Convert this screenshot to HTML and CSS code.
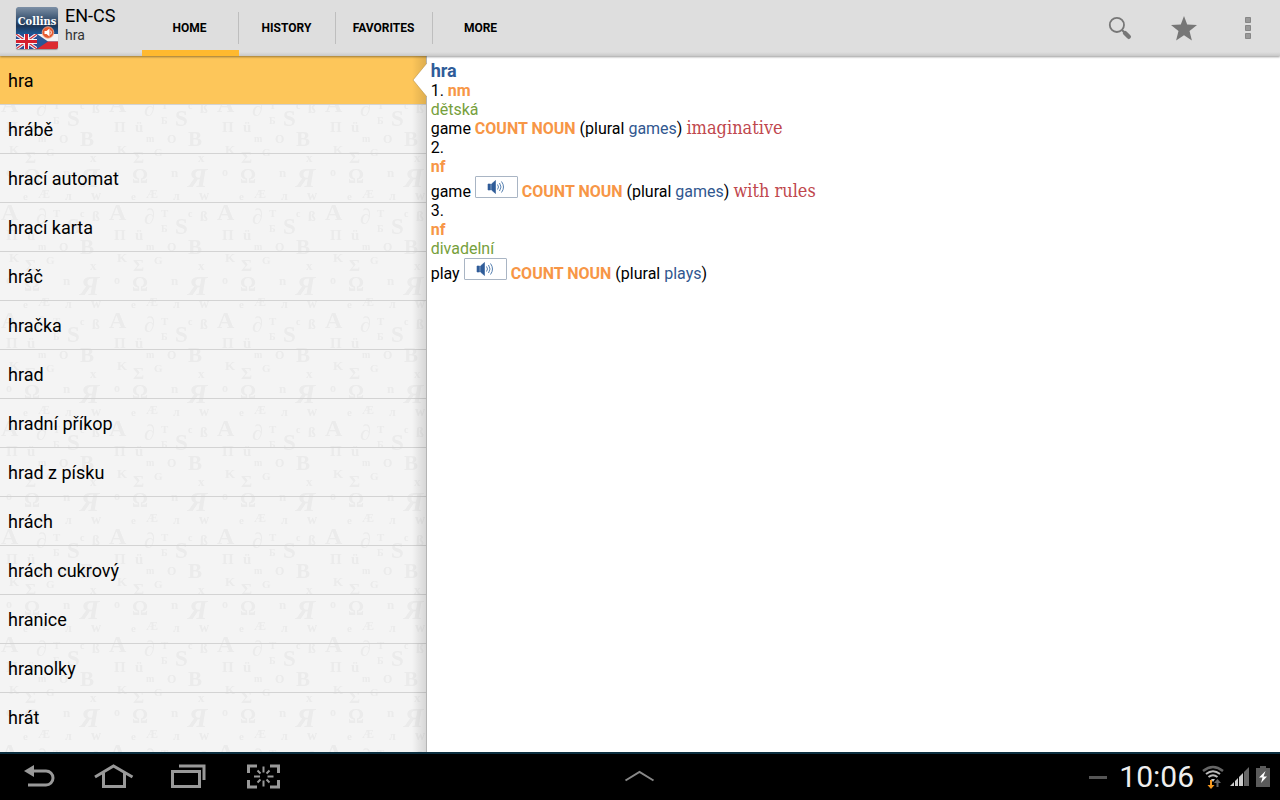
FILE: index.html
```html
<!DOCTYPE html>
<html lang="en">
<head>
<meta charset="utf-8">
<meta name="viewport" content="width=device-width, initial-scale=1">
<title>EN-CS: hra</title>
<link rel="stylesheet" href="styles.css">
</head>
<body>
<header class="action-bar">
  <svg class="app-icon" viewBox="0 0 42 42" aria-hidden="true">
    <defs>
      <linearGradient id="logo-sky" x1="0" y1="0" x2="0" y2="1">
        <stop offset="0" stop-color="#7d90a6"/>
        <stop offset=".25" stop-color="#435c78"/>
        <stop offset=".45" stop-color="#1c3557"/>
        <stop offset=".7" stop-color="#1d62a8"/>
      </linearGradient>
      <clipPath id="uk"><rect x="0" y="27" width="21" height="15"/></clipPath>
    </defs>
    <rect width="42" height="42" rx="2" fill="url(#logo-sky)"/>
    <g clip-path="url(#uk)">
      <rect y="27" width="21" height="15" fill="#2b4a92"/>
      <path d="M0 27l21 15M21 27L0 42" stroke="#f1f1f5" stroke-width="3.4"/>
      <path d="M0 27l21 15M21 27L0 42" stroke="#d2303c" stroke-width="1.2"/>
      <path d="M10.5 27v15M0 34.5h21" stroke="#f4f4f6" stroke-width="5"/>
      <path d="M10.5 27v15M0 34.5h21" stroke="#d5202e" stroke-width="3"/>
    </g>
    <rect x="21" y="27" width="21" height="7.5" fill="#f3f3f3"/>
    <rect x="21" y="34.5" width="21" height="7.5" fill="#dd2a30"/>
    <path d="M21 27l11 7.5L21 42z" fill="#2c5795"/>
    <text class="app-icon-text" x="21" y="18" text-anchor="middle">Collins</text>
    <circle cx="32" cy="25.500" r="5.800" fill="#e5592f" stroke="#f3b49b" stroke-width=".8"/>
    <path d="M28.500 24h2l3-2.500v8l-3-2.500h-2z" fill="#fff"/>
    <path d="M34.700 23.500q1.300 2 0 4" stroke="#fff" fill="none"/>
  </svg>
  <div class="titles">
    <h1 class="title">EN-CS</h1>
    <p class="subtitle">hra</p>
  </div>
  <nav class="tabs" aria-label="Sections">
    <a class="tab tab-active" href="#home" aria-current="page">HOME</a>
    <a class="tab" href="#history">HISTORY</a>
    <a class="tab" href="#favorites">FAVORITES</a>
    <a class="tab" href="#more">MORE</a>
  </nav>
  <div class="actions">
    <button class="action" type="button" aria-label="Search">
      <svg viewBox="0 0 32 32" width="32" height="32"><circle cx="12.900" cy="12.900" r="7.100" fill="none" stroke="#777" stroke-width="1.800"/><path d="M18 18l3 3" stroke="#777" stroke-width="2"/><path d="M21 21l3.800 3.800" stroke="#777" stroke-width="4.400" stroke-linecap="round"/></svg>
    </button>
    <button class="action" type="button" aria-label="Add to favorites">
      <svg viewBox="0 0 32 32" width="32" height="32"><path d="M16 4l3.200 8.400 9.800.5-7.500 6.200 2.400 9.400L16 23.300l-7.900 5.200 2.400-9.400L3 12.900l9.800-.5z" fill="#777"/></svg>
    </button>
    <button class="action" type="button" aria-label="More options">
      <svg viewBox="0 0 32 32" width="32" height="32"><path d="M13.500 5.500h5v5h-5zM13.500 13.500h5v5h-5zM13.500 21.500h5v5h-5z" fill="#999" stroke="#878787"/></svg>
    </button>
  </div>
</header>

<main class="content">
  <section class="word-pane" aria-label="Words">
    <svg class="letters" aria-hidden="true">
      <defs>
        <pattern id="letter-tile" width="108" height="108" patternUnits="userSpaceOnUse" patternTransform="translate(0 38)">
          <text x="1" y="18" font-size="24">A</text>
          <text x="36" y="22" font-size="22">&#8706;</text>
          <text x="53" y="15" font-size="11">T</text>
          <text x="80" y="15" font-size="10">c</text>
          <text x="92" y="19" font-size="14">&#223;</text>
          <text x="67" y="32" font-size="23">S</text>
          <text x="53" y="30" font-size="10">&#1041;</text>
          <text x="27" y="38" font-size="15">&#252;</text>
          <text x="6" y="38" font-size="15">&#1055;</text>
          <text x="38" y="48" font-size="10">m</text>
          <text x="59" y="49" font-size="12">O</text>
          <text x="80" y="52" font-size="21">B</text>
          <text x="9" y="60" font-size="13">K</text>
          <text x="25" y="69" font-size="17">&#931;</text>
          <text x="46" y="62" font-size="11">G</text>
          <text x="90" y="68" font-size="13">x</text>
          <text x="24" y="89" font-size="20">&#937;</text>
          <text x="63" y="83" font-size="13">n</text>
          <text x="80" y="93" font-size="28" font-style="italic">&#1071;</text>
          <text x="6" y="82" font-size="12">o</text>
          <text x="38" y="104" font-size="12">&#198;</text>
          <text x="65" y="106" font-size="12">&#1083;</text>
          <text x="91" y="106" font-size="14">w</text>
          <text x="23" y="106" font-size="11">e</text>
        </pattern>
      </defs>
      <rect width="100%" height="100%" fill="url(#letter-tile)"/>
    </svg>
    <ul class="words">
      <li class="word word-active"><a href="#w1" aria-current="true">hra</a></li>
      <li class="word"><a href="#w2">hrábě</a></li>
      <li class="word"><a href="#w3">hrací automat</a></li>
      <li class="word"><a href="#w4">hrací karta</a></li>
      <li class="word"><a href="#w5">hráč</a></li>
      <li class="word"><a href="#w6">hračka</a></li>
      <li class="word"><a href="#w7">hrad</a></li>
      <li class="word"><a href="#w8">hradní příkop</a></li>
      <li class="word"><a href="#w9">hrad z písku</a></li>
      <li class="word"><a href="#w10">hrách</a></li>
      <li class="word"><a href="#w11">hrách cukrový</a></li>
      <li class="word"><a href="#w12">hranice</a></li>
      <li class="word"><a href="#w13">hranolky</a></li>
      <li class="word"><a href="#w14">hrát</a></li>
    </ul>
    <svg class="pointer" viewBox="0 0 15 42" aria-hidden="true"><path d="M15 0v7L1 24l14 17z" fill="#fff"/><path d="M15 7L1 24l14 17" fill="none" stroke="#b9924a" stroke-opacity=".6"/></svg>
  </section>

  <article class="entry">
    <h2 class="headword">hra</h2>
    <p>1. <b class="gram">nm</b></p>
    <p class="context">dětská</p>
    <p>game <b class="gram">COUNT NOUN</b> (plural <a class="form" href="#games">games</a>) <span class="note">imaginative</span></p>
    <p>2.</p>
    <p><b class="gram">nf</b></p>
    <p>game <button class="sound" type="button" aria-label="Play pronunciation of game"><svg viewBox="0 0 18 14" width="18" height="14"><path d="M1 4h2.500v6H1z M4.500 4L8.500 .5v13L4.500 10z" fill="#2f5c99" stroke="#2f5c99" stroke-width=".6"/><path d="M10.500 4.500q2 2.500 0 5M12.500 3q3 4 0 8M14.500 1.500q4 5.500 0 11" fill="none" stroke="#5680b0"/></svg></button> <b class="gram">COUNT NOUN</b> (plural <a class="form" href="#games">games</a>) <span class="note">with rules</span></p>
    <p>3.</p>
    <p><b class="gram">nf</b></p>
    <p class="context">divadelní</p>
    <p>play <button class="sound" type="button" aria-label="Play pronunciation of play"><svg viewBox="0 0 18 14" width="18" height="14"><path d="M1 4h2.500v6H1z M4.500 4L8.500 .5v13L4.500 10z" fill="#2f5c99" stroke="#2f5c99" stroke-width=".6"/><path d="M10.500 4.500q2 2.500 0 5M12.500 3q3 4 0 8M14.500 1.500q4 5.500 0 11" fill="none" stroke="#5680b0"/></svg></button> <b class="gram">COUNT NOUN</b> (plural <a class="form" href="#plays">plays</a>)</p>
  </article>
</main>

<footer class="system-bar">
  <div class="nav-keys">
    <button class="key" type="button" aria-label="Back"><svg viewBox="0 0 40 32" width="40" height="32"><path d="M12 10h15a6.800 6.800 0 0 1 0 14H9" fill="none" stroke="#999" stroke-width="3"/><path d="M5 10l10-6v12z" fill="#999"/></svg></button>
    <button class="key" type="button" aria-label="Home"><svg viewBox="0 0 40 32" width="40" height="32"><path d="M1 16L19.500 5l19 11M9.500 12v13.500h21V12" fill="none" stroke="#999" stroke-width="3"/></svg></button>
    <button class="key" type="button" aria-label="Recent apps"><svg viewBox="0 0 40 32" width="40" height="32"><path d="M3.500 10.500h27v15h-27zM10 5h25v14" fill="none" stroke="#999" stroke-width="3"/></svg></button>
    <button class="key" type="button" aria-label="Screenshot"><svg viewBox="0 0 40 32" width="40" height="32"><path d="M13 5H4.500v7M26 5h8.500v7M13 26H4.500v-7M26 26h8.500v-7" fill="none" stroke="#999" stroke-width="3"/><path d="M19.500 5.500v6M19.500 19.500v6M10 15.500h6M23.500 15.500h6M13.500 9.500l3 3M25.500 9.500l-3 3M13.500 21.500l3-3M25.500 21.500l-3-3" fill="none" stroke="#999" stroke-width="2"/></svg></button>
  </div>
  <button class="key" type="button" aria-label="Show mini apps"><svg viewBox="0 0 40 32" width="40" height="32"><path d="M5.500 19.500l14-8.500 14 8.500" fill="none" stroke="#888" stroke-width="2"/></svg></button>
  <div class="status">
    <span class="dash"></span>
    <time class="clock">10:06</time>
    <svg viewBox="0 0 22 24" width="22" height="24" aria-hidden="true"><path d="M1 6q10-8 20 0" fill="none" stroke="#666" stroke-width="2.500"/><path d="M4 9q7-5.500 14 0M6.500 12q4.500-3.500 9 0" fill="none" stroke="#bbb" stroke-width="2"/><path d="M9 14h4l-2 3z" fill="#ccc"/><path d="M8 15v5H5.500L9 24l3.500-4H10v-5z" fill="#f79a20"/><path d="M14.500 22v-4H12l3.500-4 3.500 4h-2.500v4z" fill="#666"/></svg>
    <svg viewBox="0 0 20 20" width="20" height="20" aria-hidden="true"><path d="M0 19h4v-4zM5 19h3v-8l-3 3zM9 19h4V6L9 10z" fill="#ccc"/><path d="M14 19h5V0l-5 5z" fill="#666"/></svg>
    <svg viewBox="0 0 14 22" width="14" height="22" aria-hidden="true"><path d="M4 0h6v2h4v19H0V2h4z" fill="#5b5b5b"/><path d="M9.500 5L3 11.500h3.500L5 17l6-6.500H7.500z" fill="#fff"/></svg>
  </div>
</footer>
</body>
</html>
```
FILE: styles.css
```css
* {
  box-sizing: border-box;
}

body {
  margin: 0;
  height: 100vh;
  display: flex;
  flex-direction: column;
  overflow: hidden;
  background: #fff;
  color: #000;
  font-family: Roboto, "Noto Sans", sans-serif;
}

h1, h2, p, ul {
  margin: 0;
  padding: 0;
  font-weight: 400;
}

a {
  color: inherit;
  text-decoration: none;
}

button {
  margin: 0;
  padding: 0;
  border: 0;
  background: none;
}

svg {
  display: block;
}

/* Top bar */
.action-bar {
  position: relative;
  z-index: 2;
  flex: none;
  height: 56px;
  display: flex;
  padding-left: 16px;
  background: linear-gradient(#dedede 0 52px, #d4d4d4 54px, #c8c8c8);
  box-shadow: 0 1px 2px rgba(0, 0, 0, .4);
}

.app-icon {
  width: 42px;
  height: 42px;
  align-self: center;
  margin-right: 7px;
  border-radius: 2px;
  box-shadow: 0 1px 1px #999;
}

.app-icon-text {
  fill: #fff;
  font: bold 11px "DejaVu Serif Condensed", "DejaVu Serif", serif;
}

.titles {
  width: 77px;
  padding-top: 5px;
}

.title {
  font-size: 18px;
  line-height: 22px;
}

.subtitle {
  color: #333;
  font-size: 14px;
  line-height: 16px;
}

.tabs {
  display: flex;
}

.tab {
  width: 97px;
  display: flex;
  align-items: center;
  justify-content: center;
  border-bottom: 6px solid transparent;
  padding: 6px 2px 0 0;
  font-size: 12px;
  font-weight: 700;
  background: linear-gradient(#bebebe, #bebebe) right 12px / 1px 32px no-repeat padding-box;
}

.tab:last-child {
  background: none;
}

.tab-active {
  border-bottom-color: #ffb92f;
}

.actions {
  display: flex;
  margin-left: auto;
}

.action {
  width: 64px;
  display: grid;
  place-items: center;
}

/* Two panes */
.content {
  flex: 1;
  min-height: 0;
  display: grid;
  grid-template-columns: 1fr 2fr;
}

.word-pane {
  position: relative;
  min-height: 0;
  background: #f4f4f4;
  border-right: 1px solid #b4b4b4;
}

.word-pane::after {
  content: "";
  position: absolute;
  inset: 0 0 0 auto;
  width: 14px;
  background: linear-gradient(90deg, transparent, rgba(0, 0, 0, .12));
}

.letters {
  position: absolute;
  inset: 0;
  width: 100%;
  height: 100%;
  fill: #ebebeb;
  font-family: "Liberation Serif", serif;
  font-weight: 700;
}

.words {
  position: relative;
  list-style: none;
}

.word {
  height: 49px;
  border-bottom: 1px solid #d3d3d3;
}

.word:last-child {
  border-bottom: 0;
}

.word a {
  display: block;
  padding: 0 8px;
  font-size: 18px;
  line-height: 49px;
}

.word-active {
  background: #fdc65a;
}

.pointer {
  position: absolute;
  z-index: 1;
  top: 0;
  right: -1px;
  width: 15px;
  height: 42px;
}

/* Dictionary entry */
.entry {
  padding: 5px 4px;
  font-size: 16px;
  line-height: 19px;
}

.headword {
  color: #2f5c99;
  font-size: 18px;
  line-height: 20px;
  font-weight: 700;
}

.gram {
  color: #f79646;
}

.context {
  color: #76a03c;
}

.form {
  color: #31578f;
}

.note {
  color: #c0474d;
  font-family: "DejaVu Serif Condensed", "DejaVu Serif", serif;
  font-size: 18px;
  line-height: 1px;
}

.sound {
  width: 43px;
  height: 22px;
  display: inline-grid;
  place-items: center;
  border: 1px solid #a9b5c4;
  border-radius: 1px;
  background: #fff;
  vertical-align: 3px;
}

/* System bar */
.system-bar {
  flex: none;
  height: 48px;
  display: grid;
  grid-template-columns: 1fr auto 1fr;
  align-items: center;
  background: #000;
  border-top: 2px solid #0c2f40;
}

.nav-keys {
  display: flex;
  gap: 35px;
  padding-left: 19px;
}

.key {
  width: 40px;
  height: 32px;
}

.status {
  display: flex;
  align-items: center;
  justify-content: flex-end;
  gap: 6px;
  padding-right: 10px;
}

.dash {
  width: 18px;
  height: 3px;
  margin-right: 6px;
  background: #555;
}

.clock {
  margin-right: 2px;
  color: #eee;
  font-size: 30px;
  line-height: 32px;
}
```
